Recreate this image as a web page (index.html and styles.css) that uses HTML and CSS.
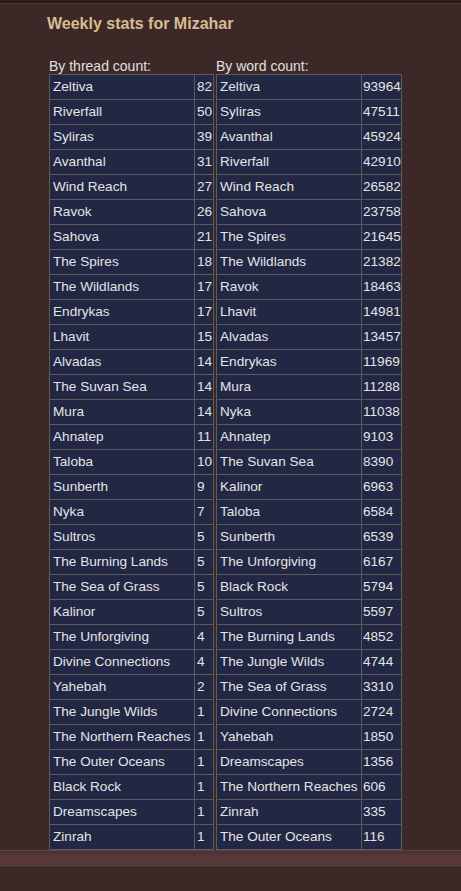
FILE: index.html
```html
<!DOCTYPE html>
<html lang="en">
<head>
<meta charset="utf-8">
<title>Weekly stats for Mizahar</title>
<link rel="stylesheet" href="styles.css">
</head>
<body>
<div class="topbar"></div>
<main class="content">
  <h1 class="title">Weekly stats for Mizahar</h1>
  <div class="stats">
    <section class="stat">
      <div class="label">By thread count:</div>
      <table class="tbl tbl-thread">
        <tr><td>Zeltiva</td><td>82</td></tr>
        <tr><td>Riverfall</td><td>50</td></tr>
        <tr><td>Syliras</td><td>39</td></tr>
        <tr><td>Avanthal</td><td>31</td></tr>
        <tr><td>Wind Reach</td><td>27</td></tr>
        <tr><td>Ravok</td><td>26</td></tr>
        <tr><td>Sahova</td><td>21</td></tr>
        <tr><td>The Spires</td><td>18</td></tr>
        <tr><td>The Wildlands</td><td>17</td></tr>
        <tr><td>Endrykas</td><td>17</td></tr>
        <tr><td>Lhavit</td><td>15</td></tr>
        <tr><td>Alvadas</td><td>14</td></tr>
        <tr><td>The Suvan Sea</td><td>14</td></tr>
        <tr><td>Mura</td><td>14</td></tr>
        <tr><td>Ahnatep</td><td>11</td></tr>
        <tr><td>Taloba</td><td>10</td></tr>
        <tr><td>Sunberth</td><td>9</td></tr>
        <tr><td>Nyka</td><td>7</td></tr>
        <tr><td>Sultros</td><td>5</td></tr>
        <tr><td>The Burning Lands</td><td>5</td></tr>
        <tr><td>The Sea of Grass</td><td>5</td></tr>
        <tr><td>Kalinor</td><td>5</td></tr>
        <tr><td>The Unforgiving</td><td>4</td></tr>
        <tr><td>Divine Connections</td><td>4</td></tr>
        <tr><td>Yahebah</td><td>2</td></tr>
        <tr><td>The Jungle Wilds</td><td>1</td></tr>
        <tr><td>The Northern Reaches</td><td>1</td></tr>
        <tr><td>The Outer Oceans</td><td>1</td></tr>
        <tr><td>Black Rock</td><td>1</td></tr>
        <tr><td>Dreamscapes</td><td>1</td></tr>
        <tr><td>Zinrah</td><td>1</td></tr>
      </table>
    </section>
    <section class="stat">
      <div class="label">By word count:</div>
      <table class="tbl tbl-word">
        <tr><td>Zeltiva</td><td>93964</td></tr>
        <tr><td>Syliras</td><td>47511</td></tr>
        <tr><td>Avanthal</td><td>45924</td></tr>
        <tr><td>Riverfall</td><td>42910</td></tr>
        <tr><td>Wind Reach</td><td>26582</td></tr>
        <tr><td>Sahova</td><td>23758</td></tr>
        <tr><td>The Spires</td><td>21645</td></tr>
        <tr><td>The Wildlands</td><td>21382</td></tr>
        <tr><td>Ravok</td><td>18463</td></tr>
        <tr><td>Lhavit</td><td>14981</td></tr>
        <tr><td>Alvadas</td><td>13457</td></tr>
        <tr><td>Endrykas</td><td>11969</td></tr>
        <tr><td>Mura</td><td>11288</td></tr>
        <tr><td>Nyka</td><td>11038</td></tr>
        <tr><td>Ahnatep</td><td>9103</td></tr>
        <tr><td>The Suvan Sea</td><td>8390</td></tr>
        <tr><td>Kalinor</td><td>6963</td></tr>
        <tr><td>Taloba</td><td>6584</td></tr>
        <tr><td>Sunberth</td><td>6539</td></tr>
        <tr><td>The Unforgiving</td><td>6167</td></tr>
        <tr><td>Black Rock</td><td>5794</td></tr>
        <tr><td>Sultros</td><td>5597</td></tr>
        <tr><td>The Burning Lands</td><td>4852</td></tr>
        <tr><td>The Jungle Wilds</td><td>4744</td></tr>
        <tr><td>The Sea of Grass</td><td>3310</td></tr>
        <tr><td>Divine Connections</td><td>2724</td></tr>
        <tr><td>Yahebah</td><td>1850</td></tr>
        <tr><td>Dreamscapes</td><td>1356</td></tr>
        <tr><td>The Northern Reaches</td><td>606</td></tr>
        <tr><td>Zinrah</td><td>335</td></tr>
        <tr><td>The Outer Oceans</td><td>116</td></tr>
      </table>
    </section>
  </div>
</main>
<div class="footband"></div>
</body>
</html>
```
FILE: styles.css
```css
html, body {
  margin: 0;
  padding: 0;
}
body {
  background: #3d2828;
  font-family: "Liberation Sans", Arial, sans-serif;
  color: #e4e4e4;
  min-height: 891px;
}
.topbar {
  height: 3px;
  background: #2a1b1b;
  border-bottom: 1px solid #553636;
}
.content {
  padding: 10px 0 0 47px;
}
.title {
  margin: 0;
  font-size: 16px;
  font-weight: bold;
  color: #d7bd91;
  line-height: 20px;
  height: 20px;
}
.stats {
  display: flex;
  gap: 2px;
  margin-top: 24px;
  padding-left: 2px;
}
.label {
  font-size: 14px;
  line-height: 16px;
  color: #e0e0e0;
  height: 16px;
}
.tbl {
  border-collapse: separate;
  border-spacing: 0;
  border-left: 1px solid #5c5c5c;
  border-top: 1px solid #5c5c5c;
  background: #222743;
  table-layout: fixed;
  font-size: 13.6px;
}
.tbl-thread {
  width: 165px;
}
.tbl-word {
  width: 186px;
}
.tbl td {
  border-right: 1px solid #5c5c5c;
  border-bottom: 1px solid #5c5c5c;
  height: 25px;
  padding: 0 0 0 3px;
  white-space: nowrap;
  overflow: hidden;
  line-height: 24px;
  box-sizing: border-box;
}
.tbl td:first-child {
  width: 145px;
}
.tbl-thread td:last-child {
  width: 19px;
  padding-left: 2px;
}
.tbl-word td:last-child {
  width: 40px;
  padding-left: 1px;
}
.footband {
  height: 16px;
  background: linear-gradient(#4a3030, #5a3a3a 40%, #553535);
  border-top: 1px solid #614040;
  border-bottom: 1px solid #2e1f1f;
}
```
